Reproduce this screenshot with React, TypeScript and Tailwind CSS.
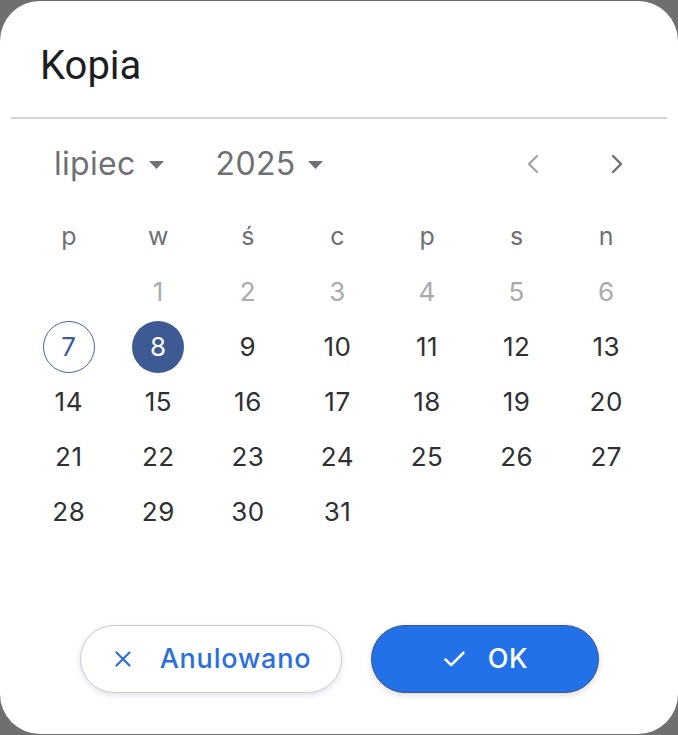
import { X, Check } from 'lucide-react'

const weekdays = ['p', 'w', 'ś', 'c', 'p', 's', 'n']

// July 2025 starts on a Tuesday; days 1–6 are shown greyed out
const days: (number | null)[] = [null, ...Array.from({ length: 31 }, (_, i) => i + 1)]

function Caret() {
  return (
    <svg width="15" height="8" viewBox="0 0 15 8" className="ml-[13px] mt-[2px]">
      <path d="M0 0 L15 0 L7.5 8 Z" fill="#6f6f74" />
    </svg>
  )
}

function Chevron({ dir, color }: { dir: 'left' | 'right'; color: string }) {
  return (
    <svg width="14" height="22" viewBox="0 0 14 22">
      <path
        d={dir === 'left' ? 'M11 3 L3 11 L11 19' : 'M3 3 L11 11 L3 19'}
        fill="none"
        stroke={color}
        strokeWidth="2.4"
        strokeLinecap="round"
        strokeLinejoin="round"
      />
    </svg>
  )
}

function Day({ day }: { day: number | null }) {
  if (day === null) return <div className="h-[55px]" />
  let cls = 'text-[#2f2f34]'
  if (day < 7) cls = 'text-[#a9a9ad]'
  if (day === 7) cls = 'text-[#3f5b96] border-[1.5px] border-[#4a64a0]'
  if (day === 8) cls = 'text-white bg-[#3e5a92]'
  return (
    <div className="flex h-[55px] items-center justify-center">
      <div className={`flex h-[52px] w-[52px] items-center justify-center rounded-full text-[26px] tracking-[0.5px] ${cls}`}>
        {day}
      </div>
    </div>
  )
}

export default function App() {
  return (
    <div className="h-[735px] w-[678px] overflow-hidden bg-[#6f6f6f] pt-[1px]" style={{ fontFamily: 'Inter, "Noto Sans", sans-serif' }}>
      <div className="flex h-[733px] w-[678px] flex-col rounded-[40px] bg-white">
        <div className="flex h-[116px] items-center pl-[40px] pt-[14px]">
          <h1 className="text-[40px] text-[#1d1d22]" style={{ fontFamily: 'Roboto, sans-serif' }}>
            Kopia
          </h1>
        </div>
        <div className="mx-[11px] h-[2px] bg-[#d3d3e3]" />

        <div className="flex h-[90px] items-center pl-[54px] pr-[54px] text-[32px] tracking-[0.3px] text-[#6f6f74]">
          <div className="flex items-center">
            lipiec
            <Caret />
          </div>
          <div className="ml-[52px] flex items-center">
            2025
            <Caret />
          </div>
          <div className="ml-auto flex items-center gap-[70px]">
            <Chevron dir="left" color="#a4a4a8" />
            <Chevron dir="right" color="#6f6f74" />
          </div>
        </div>

        <div className="ml-[24px] grid w-[627px] grid-cols-7">
          {weekdays.map((w, i) => (
            <div key={i} className="flex h-[55px] items-center justify-center text-[25px] text-[#6f6f74]">
              {w}
            </div>
          ))}
          {days.map((d, i) => (
            <Day key={i} day={d} />
          ))}
        </div>

        <div className="mt-auto mb-[41px] flex items-center justify-center gap-[29px]">
          <button className="flex h-[68px] w-[262px] items-center justify-center gap-[24px] rounded-full border-[1.5px] border-[#c8cade] bg-white text-[27px] font-medium tracking-[0.8px] text-[#2a6fe0] shadow-[0_2px_6px_rgba(0,0,0,0.12)]">
            <X size={26} strokeWidth={2} />
            Anulowano
          </button>
          <button className="flex h-[68px] w-[228px] items-center justify-center gap-[20px] rounded-full border border-[#45567e] bg-[#2371e8] text-[27px] font-medium tracking-[0.5px] text-white shadow-[0_2px_6px_rgba(0,0,0,0.15)]">
            <Check size={27} strokeWidth={2.2} />
            OK
          </button>
        </div>
      </div>
    </div>
  )
}
